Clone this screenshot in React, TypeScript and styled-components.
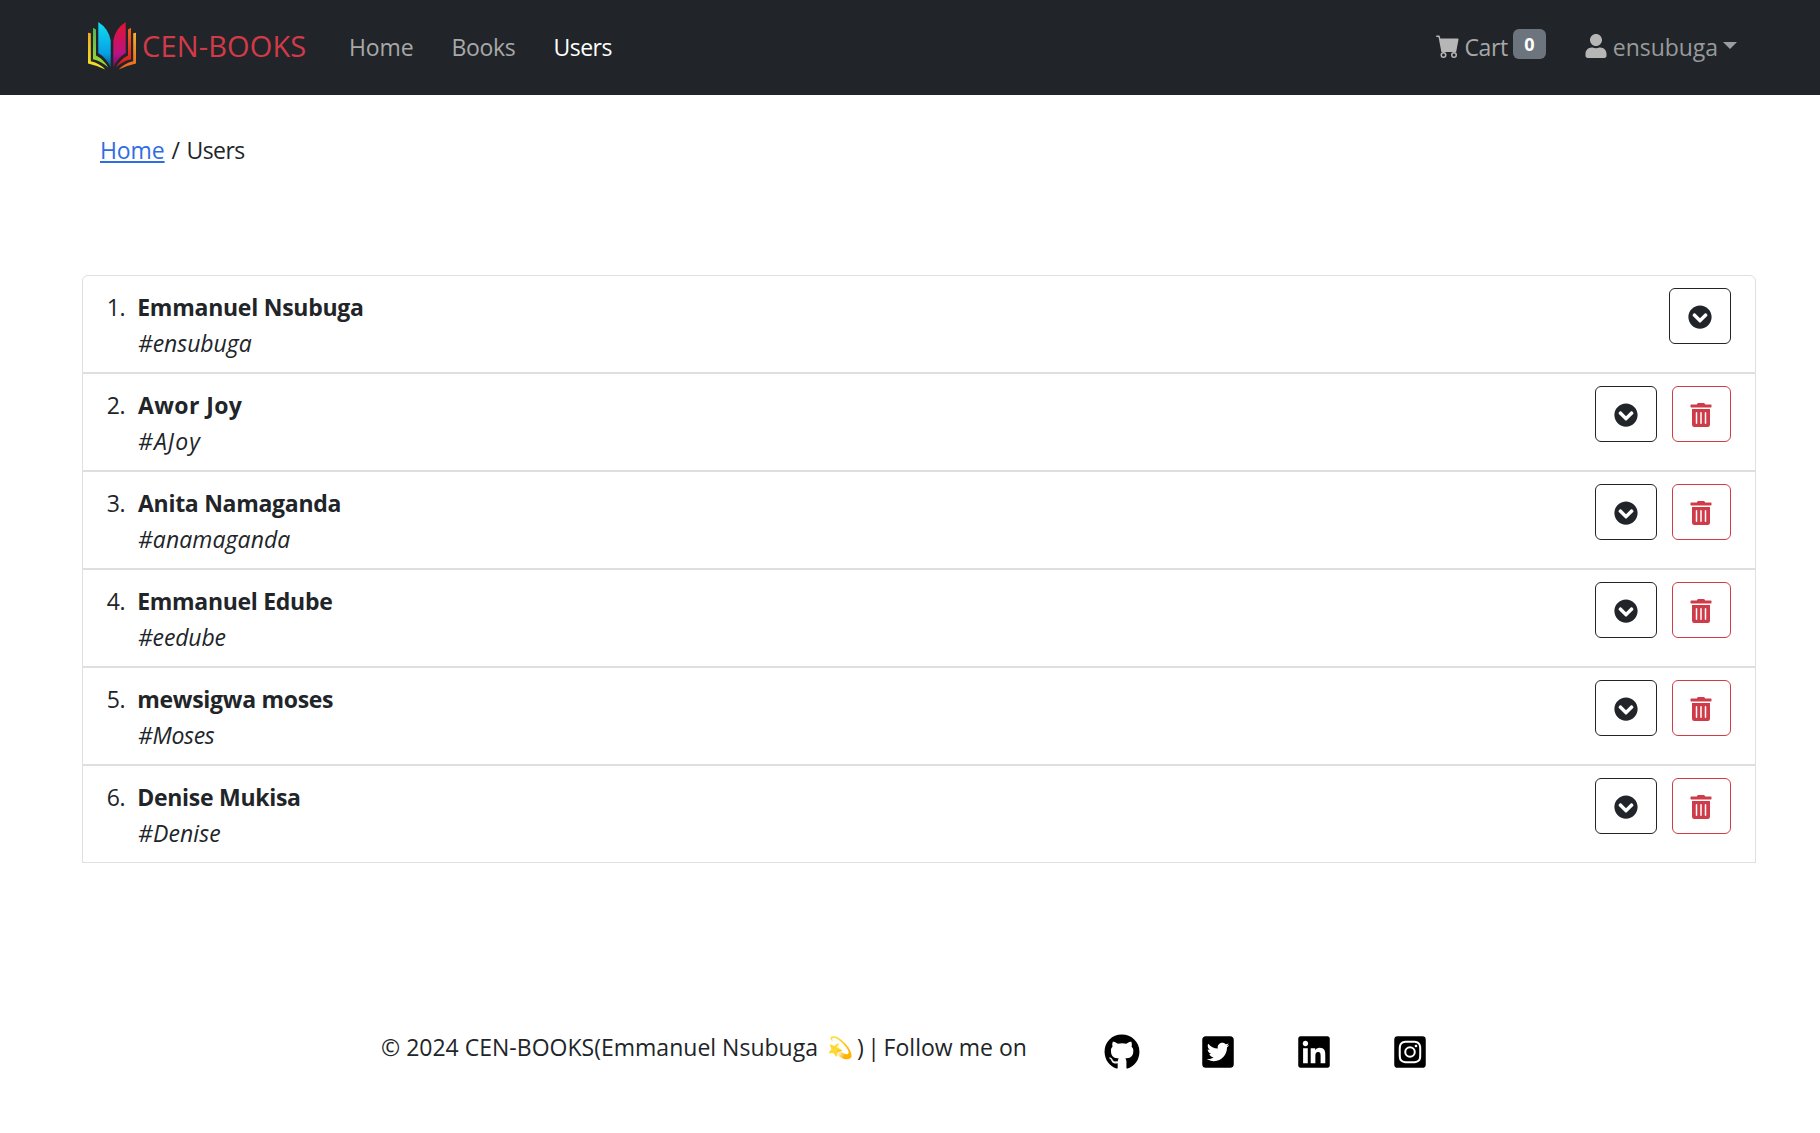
import React from 'react';
import styled, { createGlobalStyle } from 'styled-components';
import { BsCartFill } from 'react-icons/bs';
import {
  FaChevronCircleDown,
  FaGithub,
  FaInstagramSquare,
  FaLinkedin,
  FaTrashAlt,
  FaTwitterSquare,
  FaUser,
} from 'react-icons/fa';

const GlobalStyle = createGlobalStyle`
  *, *::before, *::after { box-sizing: border-box; }
  body {
    margin: 0;
    background: #fff;
    color: #212529;
    font-family: "Open Sans", "Noto Sans", sans-serif;
    font-size: 23px;
    line-height: 36px;
  }
`;

const Text = styled.span<{ $ls?: number }>`
  letter-spacing: ${p => p.$ls ?? 0}px;
  white-space: pre;
`;

const Navbar = styled.header`
  display: flex;
  align-items: flex-start;
  height: 95px;
  padding: 22px 83px 0 88px;
  background: #212529;
`;

const Brand = styled.a`
  display: flex;
  align-items: flex-start;
  gap: 6px;
  width: 261px;
  color: #d33a48;
  font-size: 29px;
  line-height: 47px;
  text-decoration: none;
`;

const Logo = styled.svg`
  display: block;
  width: 48px;
  height: 48px;
`;

const NavLinks = styled.nav`
  display: flex;
  gap: 38px;
  padding-top: 7px;
`;

const NavLink = styled.a<{ $active?: boolean }>`
  color: ${p => (p.$active ? '#fff' : '#a8a8a8')};
  text-decoration: none;
`;

const NavRight = styled.div`
  display: flex;
  align-items: flex-start;
  gap: 38px;
  margin-left: auto;
  padding-top: 7px;
`;

const NavItem = styled.div<{ $dim?: boolean }>`
  display: flex;
  align-items: flex-start;
  gap: 5px;
  color: ${p => (p.$dim ? '#989a9b' : '#a8a8a8')};

  svg {
    display: block;
    margin-top: 5px;
    color: #b6b6b6;
  }
`;

const Badge = styled.span`
  width: 33px;
  height: 30px;
  border-radius: 6px;
  background: #6c757d;
  color: #fff;
  font-size: 18px;
  font-weight: 700;
  line-height: 31px;
  text-align: center;
`;

const Caret = styled.span`
  width: 14px;
  margin-top: 13px;
  border: 7px solid transparent;
  border-top-color: #9b9d9e;
  border-bottom: 0;
`;

const Breadcrumb = styled.nav`
  display: flex;
  padding: 37px 0 0 98px;
`;

const CrumbLink = styled.a`
  margin-right: 7px;
  padding-left: 2px;
  color: #2f6ee2;
  text-decoration: underline;
  text-decoration-thickness: 2px;
  text-underline-offset: 2px;
  text-decoration-skip-ink: none;
`;

const CrumbCurrent = styled(Text)`
  margin-left: 6.5px;
`;

const List = styled.ol`
  margin: 107px 64px 0 82px;
  padding: 0;
  list-style: none;
`;

const Item = styled.li`
  display: flex;
  height: 98px;
  padding: 12px 24px;
  border: 1px solid #dfdfdf;

  &:first-child {
    border-radius: 6px 6px 0 0;
  }
`;

const Index = styled.span`
  display: flex;
  justify-content: flex-end;
  width: 18px;
  margin-right: 11px;
  padding-top: 1px;
`;

const Person = styled.div`
  display: flex;
  flex-direction: column;
  flex: 1;
  padding-top: 1px;
`;

const Name = styled.strong<{ $indent?: number }>`
  padding-left: ${p => p.$indent ?? 1.2}px;
  font-weight: 700;
`;

const Handle = styled.em`
  padding-left: 2px;
`;

const Actions = styled.div`
  display: flex;
  gap: 15px;
`;

const OutlineButton = styled.button<{ $tone: string; $width: number }>`
  display: flex;
  align-items: center;
  justify-content: center;
  width: ${p => p.$width}px;
  height: 56px;
  padding: 2px 0 0;
  border: 1px solid ${p => p.$tone};
  border-radius: 6px;
  background: transparent;
  color: ${p => p.$tone};
`;

const DeleteButton = styled(OutlineButton)`
  padding-right: 1px;
`;

const Footer = styled.footer`
  display: flex;
  align-items: flex-start;
  padding: 166px 0 0 381px;
`;

const Copyright = styled.p`
  display: flex;
  width: 723px;
  margin: 0;
`;

const Emoji = styled.span`
  width: 39px;
  padding-left: 9px;
  font-size: 21px;
`;

const Socials = styled.div`
  display: flex;
  gap: 60px;
  padding-top: 5px;
  color: #000;

  svg { display: block; }
`;

const users = [
  { name: 'Emmanuel Nsubuga', ls: -0.25, handle: '#ensubuga', hls: -0.06 },
  { name: 'Awor Joy', ls: 0.4, indent: 2, handle: '#AJoy', hls: 1.1 },
  { name: 'Anita Namaganda', ls: -0.28, indent: 2, handle: '#anamaganda', hls: 0.08 },
  { name: 'Emmanuel Edube', ls: -0.3, handle: '#eedube', hls: -0.17 },
  { name: 'mewsigwa moses', ls: -0.29, handle: '#Moses', hls: -0.3 },
  { name: 'Denise Mukisa', ls: -0.28, handle: '#Denise', hls: 0.12 },
];

function BookLogo() {
  const outer = 'M0 10.7L2.8 11.2V39.3Q12 41.5 17.3 47.6Q10 43.6 0 41.4Z';
  const middle = 'M5 5.7L8 7.6V33.6Q15.5 37.3 20.3 45.6Q14 39.4 5 37.2Z';
  const inner = 'M10.3 0Q20.5 6.5 22.7 18.5V45.5Q18.5 36 10.3 31Z';
  return (
    <Logo viewBox="0 0 48 48">
      <defs>
        <linearGradient id="cyan" x1="0" y1="0" x2="0" y2="1">
          <stop offset="0" stopColor="#12dcf0" /><stop offset=".7" stopColor="#05a0e4" /><stop offset="1" stopColor="#0a5580" />
        </linearGradient>
        <linearGradient id="green" x1="0" y1="0" x2="0" y2="1">
          <stop offset="0" stopColor="#4fb357" /><stop offset="1" stopColor="#a4dc2c" />
        </linearGradient>
        <linearGradient id="yellow" x1="0" y1="0" x2="0" y2="1">
          <stop offset="0" stopColor="#f5a91f" /><stop offset="1" stopColor="#f2e62a" />
        </linearGradient>
        <linearGradient id="magenta" x1="0" y1="0" x2="0" y2="1">
          <stop offset="0" stopColor="#e3142f" /><stop offset=".7" stopColor="#bc1284" /><stop offset="1" stopColor="#64106a" />
        </linearGradient>
        <linearGradient id="red" x1="0" y1="0" x2="0" y2="1">
          <stop offset="0" stopColor="#ee6a1c" /><stop offset="1" stopColor="#dc0f1e" />
        </linearGradient>
        <linearGradient id="orange" x1="0" y1="0" x2="0" y2="1">
          <stop offset="0" stopColor="#f7b223" /><stop offset="1" stopColor="#ee6420" />
        </linearGradient>
      </defs>
      <path d={outer} fill="url(#yellow)" />
      <path d={middle} fill="url(#green)" />
      <path d={inner} fill="url(#cyan)" />
      <g transform="translate(48 0) scale(-1 1)">
        <path d={outer} fill="url(#orange)" />
        <path d={middle} fill="url(#red)" />
        <path d={inner} fill="url(#magenta)" />
      </g>
    </Logo>
  );
}

export default function App() {
  return (
    <>
      <GlobalStyle />
      <Navbar>
        <Brand>
          <BookLogo />
          <Text $ls={0.15}>CEN-BOOKS</Text>
        </Brand>
        <NavLinks>
          <NavLink><Text $ls={-0.1}>Home</Text></NavLink>
          <NavLink><Text $ls={-0.35}>Books</Text></NavLink>
          <NavLink $active><Text $ls={-0.5}>Users</Text></NavLink>
        </NavLinks>
        <NavRight>
          <NavItem>
            <BsCartFill size={24} />
            <Text $ls={-0.4}>Cart</Text>
            <Badge>0</Badge>
          </NavItem>
          <NavItem $dim>
            <FaUser size={24} />
            <Text $ls={-0.04}>ensubuga</Text>
            <Caret />
          </NavItem>
        </NavRight>
      </Navbar>

      <Breadcrumb>
        <CrumbLink><Text $ls={-0.1}>Home</Text></CrumbLink>
        <Text>/</Text>
        <CrumbCurrent $ls={-0.6}>Users</CrumbCurrent>
      </Breadcrumb>

      <List>
        {users.map((u, i) => (
          <Item key={u.name}>
            <Index><Text $ls={-0.5}>{i + 1}.</Text></Index>
            <Person>
              <Name $indent={u.indent}><Text $ls={u.ls}>{u.name}</Text></Name>
              <Handle><Text $ls={u.hls}>{u.handle}</Text></Handle>
            </Person>
            <Actions>
              <OutlineButton $tone="#212529" $width={62}><FaChevronCircleDown size={24} /></OutlineButton>
              {i > 0 && (
                <DeleteButton $tone="#cf3c49" $width={59}><FaTrashAlt size={24} /></DeleteButton>
              )}
            </Actions>
          </Item>
        ))}
      </List>

      <Footer>
        <Copyright>
          <Text $ls={0.01}>© 2024 CEN-BOOKS(Emmanuel Nsubuga</Text>
          <Emoji>💫</Emoji>
          <Text $ls={-1.2}>) | </Text>
          <Text $ls={0.02}>Follow me on</Text>
        </Copyright>
        <Socials>
          <FaGithub size={36} />
          <FaTwitterSquare size={36} />
          <FaLinkedin size={36} />
          <FaInstagramSquare size={36} />
        </Socials>
      </Footer>
    </>
  );
}
